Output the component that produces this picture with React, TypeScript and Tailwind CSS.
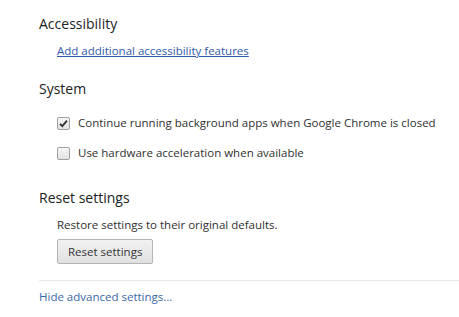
import React from "react";

export default function App() {
  return (
    <div className="w-[459px] h-[317px] bg-white overflow-hidden text-[#303030]" style={{ fontFamily: '"Open Sans", "Noto Sans", sans-serif' }}>
      <div className="pl-[39px] pt-[14px]">
        <div className="text-[14px] leading-[20px] text-[#222]">Accessibility</div>
        <div className="pl-[18px] mt-[3px]">
          <a href="#" className="text-[11.5px] leading-[16px] text-[#2f5aa8] underline">Add additional accessibility features</a>
        </div>

        <div className="text-[14px] leading-[20px] text-[#222] mt-[18px]">System</div>
        <div className="pl-[18px] mt-[16px] flex flex-col gap-[14px]">
          <label className="flex items-center gap-[8px] text-[11.5px] leading-[16px]">
            <span className="w-[13px] h-[13px] border border-[#a0a0a0] rounded-[2px] bg-gradient-to-b from-[#f6f6f6] to-[#e2e2e2] flex items-center justify-center">
              <svg width="11" height="11" viewBox="0 0 11 11"><path d="M2 5.8 L4.3 8.2 L9 2.6" fill="none" stroke="#333" strokeWidth="1.9" /></svg>
            </span>
            Continue running background apps when Google Chrome is closed
          </label>
          <label className="flex items-center gap-[8px] text-[11.5px] leading-[16px]">
            <span className="w-[13px] h-[13px] border border-[#a0a0a0] rounded-[2px] bg-gradient-to-b from-[#f6f6f6] to-[#e2e2e2]" />
            Use hardware acceleration when available
          </label>
        </div>

        <div className="text-[14px] leading-[20px] text-[#222] mt-[27px]">Reset settings</div>
        <div className="pl-[18px] mt-[9px]">
          <div className="text-[11.5px] leading-[16px]">Restore settings to their original defaults.</div>
          <button className="mt-[6px] h-[25px] px-[10px] text-[11.5px] text-[#333] border border-[#b4b4b4] rounded-[2px] bg-gradient-to-b from-[#f2f2f2] to-[#e0e0e0]">Reset settings</button>
        </div>
      </div>
      <div className="ml-[39px] mt-[16px] border-t border-[#e8e8e8]" />
      <div className="pl-[39px] mt-[8px] text-[11.5px] leading-[16px] text-[#3a67a8]">Hide advanced settings...</div>
    </div>
  );
}
